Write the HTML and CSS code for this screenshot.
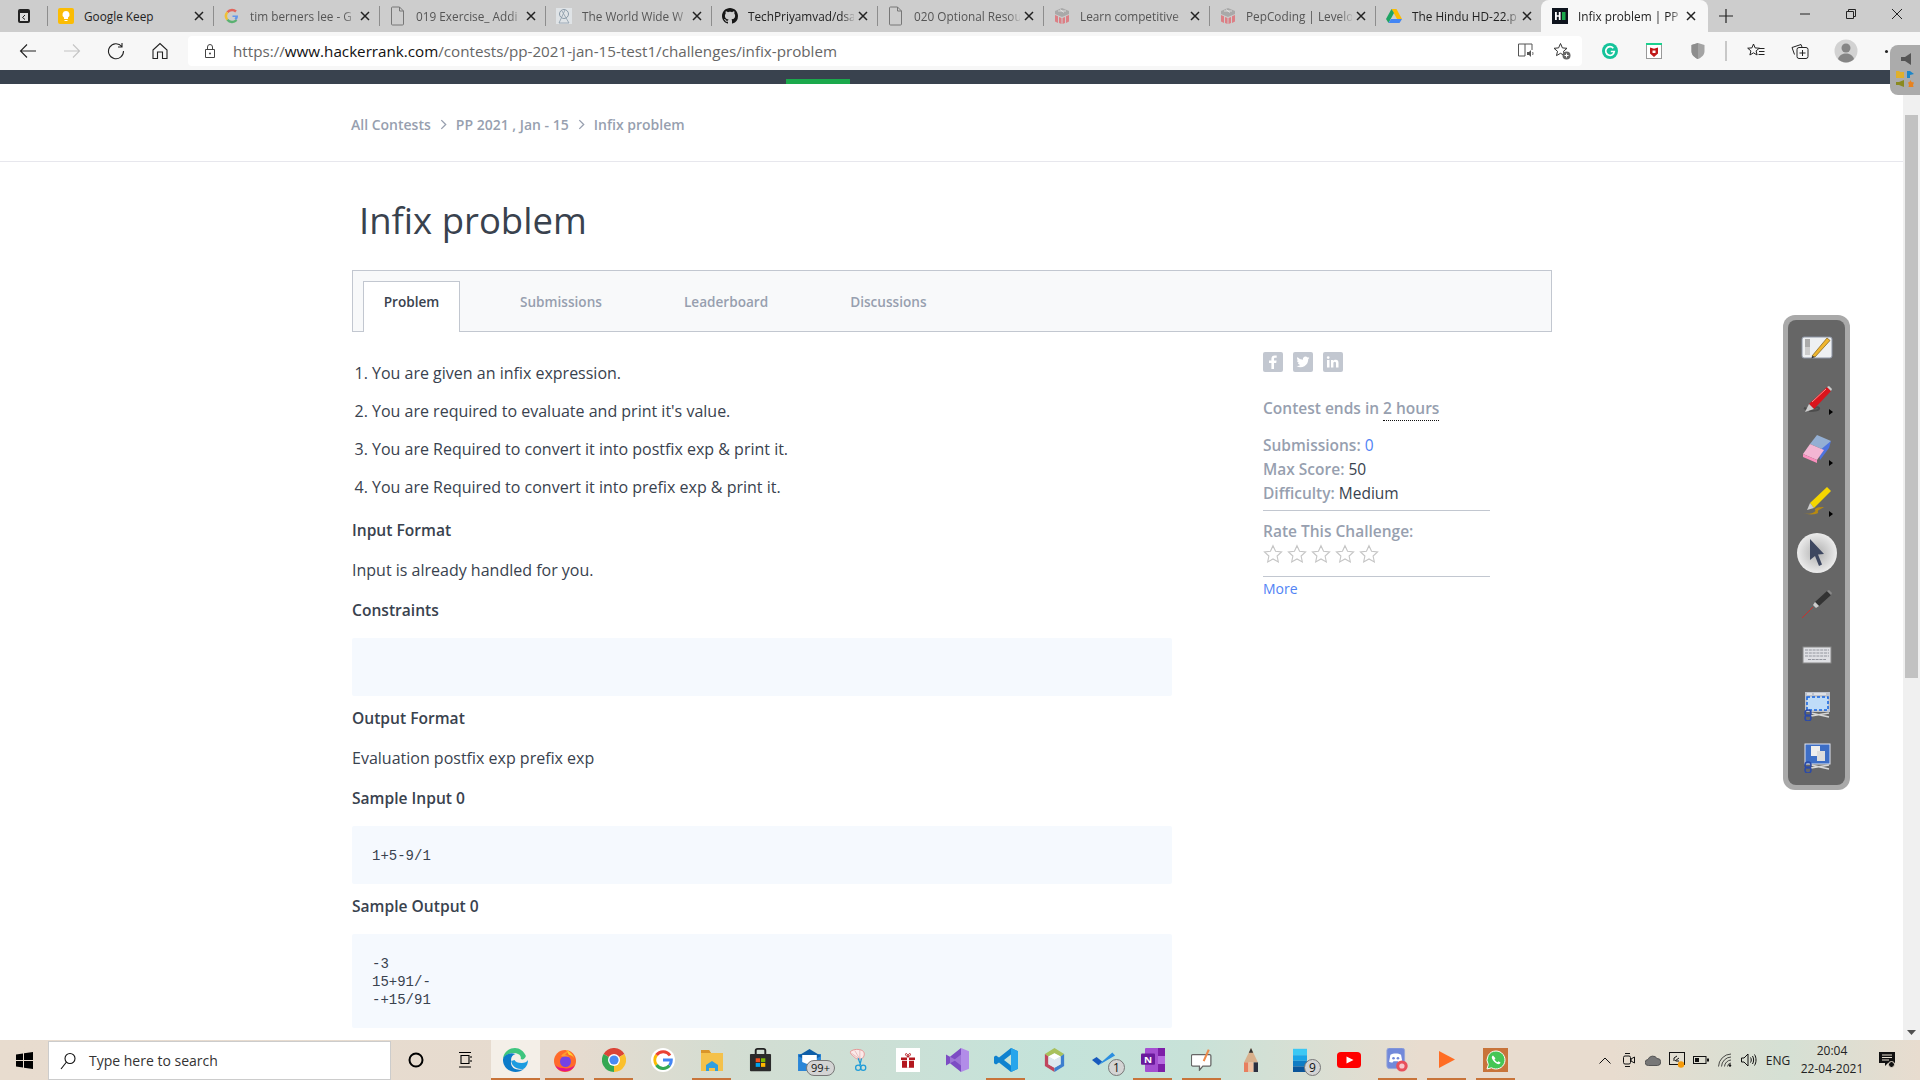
FILE: index.html
```html
<!DOCTYPE html>
<html lang="en">
<head>
<meta charset="utf-8">
<title>Infix problem | PP 2021</title>
<link rel="stylesheet" href="styles.css">
</head>
<body>
<svg class="defs" width="0" height="0">
  <defs>
    <symbol id="doc" viewBox="0 0 16 20"><path d="M2.500 1h7l4 4v13a1 1 0 0 1-1 1h-10a1 1 0 0 1-1-1V2a1 1 0 0 1 1-1zM9.500 1v4h4" fill="none" stroke="#777" stroke-width="1"/></symbol>
    <symbol id="pep" viewBox="0 0 16 16"><path d="M8 0l7 3v3l-7 3-7-3V3z" fill="#a9a9a9"/><path d="M1 7l3 1.300V15l-3-1.500zM5 9l2.500 1v6L5 15zM8.500 10L11 9v6l-2.500 1zM12 8.300L15 7v6.500L12 15z" fill="#dc7f85"/><path d="M4 3h8M6 1.500l4 3" stroke="#eee" stroke-width=".7"/></symbol>
    <symbol id="x" viewBox="0 0 10 10"><path d="M1 1l8 8M9 1l-8 8" stroke="#222" stroke-width="1.500" fill="none"/></symbol>
    <symbol id="arrow" viewBox="0 0 4 6"><path d="M0 0l4 3-4 3z" fill="#000"/></symbol>
  </defs>
</svg>

<header class="tabstrip">
  <div class="tab-menu">
    <svg width="14" height="16" viewBox="0 0 14 16"><rect x="1" y="1" width="12" height="14" rx="2" fill="#222"/><rect x="3" y="5" width="8" height="8" fill="#ddd"/><path d="M8 7L5.500 9.500 8 11.500" stroke="#222" fill="none"/></svg>
  </div>
  <div class="tab">
    <span class="sep"></span>
    <svg class="fav" viewBox="0 0 16 16"><rect width="16" height="16" rx="2" fill="#fbbc04"/><path d="M8 3a3.500 3.500 0 0 0-2 6.400V11h4V9.400A3.500 3.500 0 0 0 8 3zM6.500 12h3v1h-3z" fill="#fff"/></svg>
    <span class="tab-title dark nofade">Google Keep</span>
    <svg class="tab-x"><use href="#x"/></svg>
  </div>
  <div class="tab">
    <span class="sep"></span>
    <svg class="fav faded" viewBox="0 0 16 16"><path d="M8 2a6 6 0 0 0-4.600 2.200" stroke="#ea4335" stroke-width="2.500" fill="none"/><path d="M3.400 4.200a6 6 0 0 0 0 7.600" stroke="#fbbc05" stroke-width="2.500" fill="none"/><path d="M3.400 11.800A6 6 0 0 0 12.500 12" stroke="#34a853" stroke-width="2.500" fill="none"/><path d="M8.500 7.500H14c0 2-.5 3.300-1.500 4.500l-2-1.500c.5-.4.800-1 .9-1.500H8.500z" fill="#4285f4"/><path d="M8 2a6 6 0 0 1 4 1.500" stroke="#ea4335" stroke-width="2.500" fill="none"/></svg>
    <span class="tab-title">tim berners lee - G</span>
    <svg class="tab-x"><use href="#x"/></svg>
  </div>
  <div class="tab">
    <span class="sep"></span>
    <svg class="fav doc-fav"><use href="#doc"/></svg>
    <span class="tab-title">019 Exercise_ Addi</span>
    <svg class="tab-x"><use href="#x"/></svg>
  </div>
  <div class="tab">
    <span class="sep"></span>
    <svg class="fav" viewBox="0 0 16 16"><rect width="16" height="16" fill="#dfe3e6"/><circle cx="8" cy="6" r="4.500" fill="none" stroke="#8a9aa8"/><path d="M3 15L9 2M13 15L6 3M3 15h10" stroke="#8a9aa8" fill="none" stroke-width=".8"/></svg>
    <span class="tab-title">The World Wide W</span>
    <svg class="tab-x"><use href="#x"/></svg>
  </div>
  <div class="tab">
    <span class="sep"></span>
    <svg class="fav" viewBox="0 0 16 16"><path fill="#161616" d="M8 0C3.580 0 0 3.580 0 8c0 3.540 2.290 6.530 5.470 7.590.4.070.55-.17.55-.38 0-.19-.01-.82-.01-1.490-2.010.37-2.530-.49-2.690-.94-.09-.23-.48-.94-.82-1.130-.28-.15-.68-.52-.01-.53.63-.01 1.080.58 1.230.82.72 1.210 1.870.87 2.330.66.070-.52.28-.87.51-1.070-1.780-.2-3.640-.89-3.640-3.950 0-.87.31-1.590.82-2.150-.08-.2-.36-1.020.08-2.120 0 0 .67-.21 2.200.82.64-.18 1.320-.27 2-.27.68 0 1.360.09 2 .27 1.530-1.040 2.200-.82 2.200-.82.44 1.100.16 1.920.08 2.120.51.56.82 1.270.82 2.150 0 3.070-1.870 3.750-3.650 3.950.29.25.54.73.54 1.480 0 1.070-.01 1.930-.01 2.200 0 .21.15.46.55.38A8.013 8.013 0 0 0 16 8c0-4.420-3.580-8-8-8z"/></svg>
    <span class="tab-title dark">TechPriyamvad/dsa</span>
    <svg class="tab-x"><use href="#x"/></svg>
  </div>
  <div class="tab">
    <span class="sep"></span>
    <svg class="fav doc-fav"><use href="#doc"/></svg>
    <span class="tab-title">020 Optional Resou</span>
    <svg class="tab-x"><use href="#x"/></svg>
  </div>
  <div class="tab">
    <span class="sep"></span>
    <svg class="fav"><use href="#pep"/></svg>
    <span class="tab-title">Learn competitive</span>
    <svg class="tab-x"><use href="#x"/></svg>
  </div>
  <div class="tab">
    <span class="sep"></span>
    <svg class="fav"><use href="#pep"/></svg>
    <span class="tab-title">PepCoding | Levelo</span>
    <svg class="tab-x"><use href="#x"/></svg>
  </div>
  <div class="tab">
    <span class="sep"></span>
    <svg class="fav" viewBox="0 0 16 16"><path d="M5.500 1h5L16 11h-5z" fill="#fbbc04"/><path d="M5.500 1L0 11l2.500 4L8 5z" fill="#1fa463"/><path d="M2.500 15h11l2.500-4H5z" fill="#4285f4"/></svg>
    <span class="tab-title dark">The Hindu HD-22.p</span>
    <svg class="tab-x"><use href="#x"/></svg>
  </div>
  <div class="tab active">
    <svg class="fav" viewBox="0 0 16 16"><rect width="16" height="16" fill="#0e141e"/><path d="M3 4h1.800v3.200h2V4h1.800v8H6.800V8.800h-2V12H3z" fill="#fff"/><rect x="10" y="4" width="3.500" height="8" fill="#1ba94c"/></svg>
    <span class="tab-title dark">Infix problem | PP 2</span>
    <svg class="tab-x"><use href="#x"/></svg>
  </div>
  <svg class="newtab" width="16" height="16" viewBox="0 0 16 16"><path d="M8 1v14M1 8h14" stroke="#222" stroke-width="1.200"/></svg>
  <div class="winctl">
    <span class="winbtn"><svg width="12" height="12" viewBox="0 0 12 12"><path d="M1 6h10" stroke="#222"/></svg></span>
    <span class="winbtn"><svg width="12" height="12" viewBox="0 0 12 12"><path d="M1.500 3.500h7v7h-7zM3.500 3.500v-2h7v7h-2" fill="none" stroke="#222"/></svg></span>
    <span class="winbtn"><svg width="12" height="12" viewBox="0 0 12 12"><path d="M1 1l10 10M11 1L1 11" stroke="#222"/></svg></span>
  </div>
</header>

<nav class="toolbar">
  <span class="tbtn"><svg width="18" height="18" viewBox="0 0 18 18"><path d="M17 9H1.500M8 2.500L1.500 9 8 15.500" fill="none" stroke="#222" stroke-width="1.100"/></svg></span>
  <span class="tbtn"><svg width="18" height="18" viewBox="0 0 18 18"><path d="M1 9h15.500M10 2.500L16.500 9 10 15.500" fill="none" stroke="#c4c4c4" stroke-width="1.100"/></svg></span>
  <span class="tbtn"><svg width="18" height="18" viewBox="0 0 18 18"><path d="M14.800 4.500A7.500 7.500 0 1 0 16.500 9M15 1v4h-4" fill="none" stroke="#222" stroke-width="1.100"/></svg></span>
  <span class="tbtn"><svg width="18" height="18" viewBox="0 0 18 18"><path d="M2 8l7-6.500L16 8v8.500h-4.500V10h-5v6.500H2z" fill="none" stroke="#222" stroke-width="1.100"/></svg></span>
  <div class="address">
    <svg class="lock" width="14" height="16" viewBox="0 0 14 16"><path d="M2.500 6.500h9v8h-9zM4.500 6.500V4a2.500 2.500 0 0 1 5 0v2.500" fill="none" stroke="#444"/><circle cx="7" cy="10.500" r="1" fill="#444"/></svg>
    <span class="url">https://<b>www.hackerrank.com</b>/contests/pp-2021-jan-15-test1/challenges/infix-problem</span>
    <span class="addr-icon"><svg width="18" height="16" viewBox="0 0 18 16"><path d="M8 13H1.500V1H8v12zM8 1h7v6" fill="none" stroke="#555"/><path d="M10 9h2l2-2v7l-2-2h-2z" fill="#555"/><path d="M15.500 9c.6.8.6 2.200 0 3" stroke="#555" fill="none"/></svg></span>
    <span class="addr-icon last"><svg width="18" height="18" viewBox="0 0 18 18"><path d="M7.500 1.500l1.900 4.400 4.600.4-3.500 3 1 4.300-4-2.300-4 2.300 1-4.300-3.500-3 4.600-.4z" fill="none" stroke="#333"/><circle cx="13.500" cy="13.500" r="4" fill="#666"/><path d="M11.500 13.500h4M13.500 11.500v4" stroke="#fff"/></svg></span>
  </div>
  <div class="ext">
    <span class="ext-btn"><svg width="16" height="16" viewBox="0 0 16 16"><circle cx="8" cy="8" r="8" fill="#15c39a"/><path d="M11.300 5.200A4.300 4.300 0 1 0 12.300 8.500H8.800" fill="none" stroke="#fff" stroke-width="1.700"/></svg></span>
    <span class="ext-btn"><svg width="16" height="16" viewBox="0 0 16 16"><rect x=".5" y=".5" width="15" height="15" fill="#fff" stroke="#999"/><rect width="16" height="2" fill="#1bd18e"/><path d="M4 4.500l4 1.200 4-1.200v6L8 14l-4-3.500z" fill="#c01818"/><path d="M6.500 7.500h3v2.500h-3z" fill="#fff"/></svg></span>
    <span class="ext-btn"><svg width="14" height="16" viewBox="0 0 14 16"><path d="M7 0l6.500 2v6c0 4-3 6.500-6.500 8-3.500-1.500-6.500-4-6.500-8V2z" fill="#a4a4a4"/><path d="M7 0v16c-3.500-1.500-6.500-4-6.500-8V2z" fill="#8e8e8e"/></svg></span>
    <span class="ext-sep"></span>
    <span class="ext-btn fav-btn"><svg width="18" height="18" viewBox="0 0 18 18"><path d="M6.500 2l1.600 3.900 4.200.3-3.200 2.700 1 4.100-3.600-2.200L2.900 13l1-4.100L.7 6.200l4.200-.3z" fill="none" stroke="#222"/><path d="M12 6.500h5.500M12 9.500h5.500M11.500 12.500h6" stroke="#222"/></svg></span>
    <span class="ext-btn"><svg width="18" height="18" viewBox="0 0 18 18"><path d="M3.500 12.500L1 5.500l9-3 1 2.500" fill="none" stroke="#222"/><rect x="6" y="5.500" width="11" height="11" rx="2" fill="#f7f7f7" stroke="#222"/><path d="M11.500 8v6M8.500 11h6" stroke="#222"/></svg></span>
    <span class="ext-btn avatar-btn"><svg width="24" height="24" viewBox="0 0 24 24"><circle cx="12" cy="12" r="11.500" fill="#d2d2d2"/><circle cx="12" cy="9" r="4.500" fill="#858585"/><path d="M4 20c1.500-4 4.500-5.500 8-5.500s6.500 1.500 8 5.500c-2 2.300-5 3.500-8 3.500s-6-1.200-8-3.500z" fill="#858585"/></svg></span>
    <span class="ext-btn dots-btn"><span class="dots"></span></span>
  </div>
</nav>

<div class="page">
  <main class="content">
    <div class="navbar"><span class="nav-active"></span></div>
    <div class="crumbs">
      <a>All Contests</a>
      <svg width="7" height="11" viewBox="0 0 6 10"><path d="M1 1l4 4-4 4" fill="none" stroke="#979faf" stroke-width="1.200"/></svg>
      <a>PP 2021 , Jan - 15</a>
      <svg width="7" height="11" viewBox="0 0 6 10"><path d="M1 1l4 4-4 4" fill="none" stroke="#979faf" stroke-width="1.200"/></svg>
      <a>Infix problem</a>
    </div>
    <div class="wrap">
      <h1 class="title">Infix problem</h1>
      <div class="ptabs">
        <a class="ptab current">Problem</a>
        <a class="ptab first">Submissions</a>
        <a class="ptab">Leaderboard</a>
        <a class="ptab">Discussions</a>
      </div>
      <div class="columns">
        <article class="statement">
          <ol class="steps">
            <li>You are given an infix expression.</li>
            <li>You are required to evaluate and print it's value.</li>
            <li>You are Required to convert it into postfix exp &amp; print it.</li>
            <li>You are Required to convert it into prefix exp &amp; print it.</li>
          </ol>
          <h4 class="section first-section">Input Format</h4>
          <p class="para">Input is already handled for you.</p>
          <h4 class="section">Constraints</h4>
          <pre class="code empty"></pre>
          <h4 class="section">Output Format</h4>
          <p class="para">Evaluation postfix exp prefix exp</p>
          <h4 class="section">Sample Input 0</h4>
          <pre class="code">1+5-9/1</pre>
          <h4 class="section">Sample Output 0</h4>
          <pre class="code">-3
15+91/-
-+15/91</pre>
        </article>
        <aside class="side">
          <div class="social">
            <span class="soc"><svg width="20" height="20" viewBox="0 0 20 20"><path d="M11 17v-6h2.200l.4-2.500H11V7c0-.8.300-1.200 1.300-1.200h1.400V3.500c-.4 0-1.100-.1-2-.1-2 0-3.300 1.200-3.300 3.300v1.800H6V11h2.400v6z" fill="#fff"/></svg></span>
            <span class="soc"><svg width="20" height="20" viewBox="0 0 20 20"><path d="M16.500 5.800c-.5.200-1 .4-1.500.4.500-.3 1-.8 1.200-1.400-.5.300-1.100.5-1.700.6a2.700 2.700 0 0 0-4.600 2.400A7.500 7.500 0 0 1 4.400 5a2.700 2.700 0 0 0 .8 3.600c-.4 0-.8-.1-1.200-.3 0 1.300.9 2.400 2.100 2.700-.4.100-.8.100-1.200 0 .3 1.100 1.300 1.800 2.500 1.900A5.400 5.400 0 0 1 3.500 14a7.600 7.600 0 0 0 11.700-6.700c.5-.4 1-.9 1.300-1.500z" fill="#fff"/></svg></span>
            <span class="soc"><svg width="20" height="20" viewBox="0 0 20 20"><path d="M4 8h2.500v7.500H4zM5.200 4.200a1.400 1.400 0 1 1 0 2.800 1.400 1.400 0 0 1 0-2.800zM8 8h2.400v1c.4-.7 1.200-1.200 2.300-1.200 2.300 0 2.800 1.500 2.800 3.500v4.200H13v-3.700c0-.9 0-2-1.200-2s-1.400 1-1.400 1.900v3.800H8z" fill="#fff"/></svg></span>
          </div>
          <p class="ends">Contest ends in <span class="hours">2 hours</span></p>
          <p class="stat first-stat">Submissions: <a class="blue">0</a></p>
          <p class="stat">Max Score: <span class="val">50</span></p>
          <p class="stat">Difficulty: <span class="val">Medium</span></p>
          <hr class="rule">
          <p class="stat rate">Rate This Challenge:</p>
          <div class="stars">
            <svg width="20" height="20" viewBox="0 0 18 18"><path d="M9 1.500l2.300 5 5.400.6-4 3.700 1.100 5.400L9 13.500l-4.800 2.700 1.100-5.400-4-3.700 5.400-.6z" fill="#fff" stroke="#c5c5c5"/></svg>
            <svg width="20" height="20" viewBox="0 0 18 18"><path d="M9 1.500l2.300 5 5.400.6-4 3.700 1.100 5.400L9 13.500l-4.800 2.700 1.100-5.400-4-3.700 5.400-.6z" fill="#fff" stroke="#c5c5c5"/></svg>
            <svg width="20" height="20" viewBox="0 0 18 18"><path d="M9 1.500l2.300 5 5.400.6-4 3.700 1.100 5.400L9 13.500l-4.800 2.700 1.100-5.400-4-3.700 5.400-.6z" fill="#fff" stroke="#c5c5c5"/></svg>
            <svg width="20" height="20" viewBox="0 0 18 18"><path d="M9 1.500l2.300 5 5.400.6-4 3.700 1.100 5.400L9 13.500l-4.800 2.700 1.100-5.400-4-3.700 5.400-.6z" fill="#fff" stroke="#c5c5c5"/></svg>
            <svg width="20" height="20" viewBox="0 0 18 18"><path d="M9 1.500l2.300 5 5.400.6-4 3.700 1.100 5.400L9 13.500l-4.800 2.700 1.100-5.400-4-3.700 5.400-.6z" fill="#fff" stroke="#c5c5c5"/></svg>
          </div>
          <hr class="rule lower">
          <a class="more">More</a>
        </aside>
      </div>
    </div>
  </main>
  <div class="scrollbar">
    <svg class="sb-arrow" width="9" height="5" viewBox="0 0 9 5"><path d="M0 0h9L4.500 5z" fill="#505050"/></svg>
    <div class="sb-thumb"></div>
    <svg class="sb-arrow" width="9" height="5" viewBox="0 0 9 5"><path d="M0 0h9L4.500 5z" fill="#505050"/></svg>
  </div>
</div>

<footer class="taskbar">
  <span class="start"><svg width="17" height="17" viewBox="0 0 17 17"><path d="M0 2.400L7 1.400v6.600H0zM8 1.300L17 0v8H8zM0 9h7v6.600l-7-1zM8 9h9v8l-9-1.300z" fill="#000"/></svg></span>
  <div class="search">
    <svg width="16" height="18" viewBox="0 0 16 18"><circle cx="10" cy="6.500" r="5" fill="none" stroke="#111" stroke-width="1.100"/><path d="M6.500 10L1 17" stroke="#111" stroke-width="1.100"/></svg>
    <span>Type here to search</span>
  </div>
  <span class="tb-sys"><svg width="16" height="16" viewBox="0 0 16 16"><circle cx="8" cy="8" r="6.500" fill="none" stroke="#000" stroke-width="2"/></svg></span>
  <span class="tb-sys"><svg width="16" height="16" viewBox="0 0 16 16"><path d="M2 .5h12M4 3.500h8v8H4zM2 15h12M14 4v2M14 8v2" fill="none" stroke="#000" stroke-width="1.100"/></svg></span>
  <div class="tb-apps">
    <span class="app open lit"><svg width="25" height="24" viewBox="0 0 24 24" preserveAspectRatio="none"><path d="M22 8C20 3 16 0 11.500 0 5 0 .5 5 0 11c2-4 6-6 10-6 4 0 8 2 7 6 2 1 4 0 5-3z" fill="#3ec57e"/><path d="M0 11C-.5 18 5 24 12 24c3 0 6-1 8-3-3 1-7 1-10-1-2-2-3-5-2-7-1-3 1-6 4-7C6 4 1 7 0 11z" fill="#0c7bc9"/><path d="M8 13c0 4 4 8 9 8 2 0 3 0 4-1 2-2 3-5 3-8-1 2-3 3-6 3-4 0-6-1-7-3z" fill="#1d9ce0"/></svg></span>
    <span class="app open"><svg width="24" height="24" viewBox="0 0 24 24"><circle cx="12" cy="13" r="11" fill="#ff6a2a"/><path d="M2 17a11 11 0 0 0 20 0c-3 3-8 4-12 3-4 0-6-1-8-3z" fill="#e31587"/><path d="M13 2c3 1 7 4 8 8-2-3-4-3-5-3z" fill="#ffd02f"/><circle cx="12.500" cy="13.500" r="5.500" fill="#7542e5"/><path d="M8 8c2-3 5-4 7-5-1 2-2 3-3 4 2 0 3 1 4 2-3-1-6 0-8-1z" fill="#ff9b2f"/></svg></span>
    <span class="app open"><svg width="24" height="24" viewBox="0 0 24 24"><path d="M12 12L1.600 6A12 12 0 0 1 22.400 6z" fill="#db4437"/><path d="M12 12L22.400 6A12 12 0 0 1 12 24z" fill="#fbc02d"/><path d="M12 24A12 12 0 0 1 1.600 6L12 12z" fill="#33a852"/><circle cx="12" cy="12" r="6" fill="#fff"/><circle cx="12" cy="12" r="4.600" fill="#4a8af4"/></svg></span>
    <span class="app"><svg width="24" height="24" viewBox="0 0 24 24"><circle cx="12" cy="12" r="12" fill="#fff"/><path d="M19 7.500A8.300 8.300 0 0 0 5.500 7" fill="none" stroke="#ea4335" stroke-width="3"/><path d="M5.500 7a8.300 8.300 0 0 0 0 10" fill="none" stroke="#fbbc05" stroke-width="3"/><path d="M5.500 17a8.300 8.300 0 0 0 13 .5" fill="none" stroke="#34a853" stroke-width="3"/><path d="M18.500 17.500A8.300 8.300 0 0 0 20.300 12H12" fill="none" stroke="#4285f4" stroke-width="3"/></svg></span>
    <span class="app open"><svg width="24" height="24" viewBox="0 0 24 24"><path d="M1 2h8l2 3h12v18H1z" fill="#f4c14b"/><path d="M1 2h8l2 3H1z" fill="#d9952a"/><path d="M6 23v-6l6-4 6 4v6h-3v-3H9v3z" fill="#2f9fe0"/></svg></span>
    <span class="app"><svg width="23" height="24" viewBox="0 0 24 28" preserveAspectRatio="none"><path d="M7 7V3a2 2 0 0 1 2-2h6a2 2 0 0 1 2 2v4" fill="none" stroke="#222" stroke-width="2"/><rect x="1" y="7" width="22" height="20" rx="1" fill="#2b2b2b"/><rect x="7" y="12" width="4.500" height="4.500" fill="#f25022"/><rect x="12.500" y="12" width="4.500" height="4.500" fill="#7fba00"/><rect x="7" y="17.500" width="4.500" height="4.500" fill="#00a4ef"/><rect x="12.500" y="17.500" width="4.500" height="4.500" fill="#ffb900"/></svg></span>
    <span class="app"><svg width="25" height="24" viewBox="0 0 24 24" preserveAspectRatio="none"><rect x="1" y="6" width="22" height="17" fill="#2a86d8"/><path d="M1 8l11-7 11 7-11 6z" fill="#0f5fa8"/><path d="M5 7h14v7l-7 3-7-3z" fill="#fff"/></svg><span class="badge wide">99+</span></span>
    <span class="app"><svg width="22" height="24" viewBox="0 0 26 28" preserveAspectRatio="none"><path d="M3 4c4-3 10-3 14-1 3 2 3 6 0 9-3 2-7 1-9-1-2-2-6-4-5-7z" fill="#fbe9e9" stroke="#e88b8b"/><path d="M4 6l10 7M8 3l6 10M14 2v11" stroke="#d8a0a0" stroke-width=".7"/><path d="M12 12l3 8M16 12l-2 8" stroke="#1f9cd8" stroke-width="1.500"/><circle cx="12" cy="23" r="3" fill="none" stroke="#1f9cd8" stroke-width="1.500"/><circle cx="18" cy="23" r="3" fill="none" stroke="#1f9cd8" stroke-width="1.500"/></svg></span>
    <span class="app"><svg width="24" height="24" viewBox="0 0 24 28" preserveAspectRatio="none"><rect width="24" height="28" fill="#fff"/><path d="M5 11h14v3H5zM6 15h12v8H6z" fill="#b3171e"/><path d="M11 11h2v12h-2z" fill="#fff"/><path d="M12 10.500C9 9 9 6 10.500 6.500S12 10.500 12 10.500zM12 10.500C15 9 15 6 13.500 6.500S12 10.500 12 10.500z" fill="none" stroke="#b3171e"/></svg></span>
    <span class="app"><svg width="24" height="24" viewBox="0 0 24 30" preserveAspectRatio="none"><path d="M16 0l8 4v22l-8 4z" fill="#b28ce8"/><path d="M16 0v30L5 19 1 22V8l4 3z" fill="#7d4cc4"/><path d="M5 11l6 4-6 4zM16 8v14l-7-7z" fill="#c7a8f0" opacity=".45"/></svg></span>
    <span class="app open"><svg width="24" height="24" viewBox="0 0 24 30" preserveAspectRatio="none"><path d="M17 0l7 4v22l-7 4L5 18l-3 2.500L0 19v-8l2-1.500L5 12zM17 8l-7 7 7 7z" fill="#0f82cf"/><path d="M17 0l7 4v22l-7 4z" fill="#27a5ec"/></svg></span>
    <span class="app"><svg width="21" height="24" viewBox="0 0 24 28" preserveAspectRatio="none"><path d="M12 0l11 7-4 3-7-4-7 4-4-3z" fill="#a9c15c"/><path d="M1 7l4 3v9l7 4v5L1 21z" fill="#c0465e"/><path d="M23 7l-4 3v9l-7 4v5l11-7z" fill="#3d7fcf"/><path d="M12 6l7 4-7 4-7-4z" fill="#fff"/><path d="M5 10l7 4v9l-7-4zM19 10l-7 4v9l7-4z" fill="#dde8ef"/></svg></span>
    <span class="app"><svg width="24" height="18" viewBox="0 0 26 24" preserveAspectRatio="none"><path d="M0 12l5-4 6 6-4 5z" fill="#185abd"/><path d="M7 19l4-5L22 2l3 4z" fill="#2b8fe0"/></svg><span class="badge round">1</span></span>
    <span class="app open"><svg width="24" height="24" viewBox="0 0 24 30" preserveAspectRatio="none"><rect x="4" y="0" width="20" height="30" rx="1" fill="#a44fd1"/><rect x="17" y="0" width="7" height="30" fill="#7d1fa8"/><rect x="17" y="10" width="7" height="10" fill="#b66be0"/><rect x="0" y="7" width="14" height="14" rx="1" fill="#6a1a9c"/><text class="on-n" x="7" y="18.500">N</text></svg></span>
    <span class="app open"><svg width="22" height="23" viewBox="0 0 26 28" preserveAspectRatio="none"><path d="M2 8h20a1.500 1.500 0 0 1 1.500 1.500v11a1.500 1.500 0 0 1-1.500 1.500h-8l-4 5v-5H2a1.500 1.500 0 0 1-1.500-1.500v-11A1.500 1.500 0 0 1 2 8z" fill="#fff" stroke="#666" stroke-width="1.500"/><path d="M15 16L21 2" stroke="#ee8a4a" stroke-width="2.500"/></svg></span>
    <span class="app"><svg width="14" height="24" viewBox="0 0 16 30" preserveAspectRatio="none"><path d="M8 0l8 18H0z" fill="#d8b08c"/><path d="M8 0l2.500 6h-5z" fill="#333"/><path d="M0 18h5v12H0z" fill="#e87f5f"/><path d="M5 18h6v12H5z" fill="#f0c0a0"/><path d="M11 18h5v12h-5z" fill="#2b3040"/></svg></span>
    <span class="app"><svg width="14" height="24" viewBox="0 0 16 30" preserveAspectRatio="none"><path d="M0 1h16v8H0z" fill="#3cc8f4"/><path d="M0 9h16v7H0z" fill="#1aa5e8"/><path d="M0 16h16v7H0z" fill="#0f7cc4"/><path d="M0 23h16v7H0z" fill="#0a559a"/></svg><span class="badge round">9</span></span>
    <span class="app"><svg width="24" height="16" viewBox="0 0 24 18" preserveAspectRatio="none"><rect width="24" height="18" rx="4" fill="#f00"/><path d="M9.500 5v8l7-4z" fill="#fff"/></svg></span>
    <span class="app open"><svg width="23" height="24" viewBox="0 0 26 28" preserveAspectRatio="none"><rect x="1" y="0" width="20" height="24" rx="3" fill="#7289da" stroke="#97a6d8"/><path d="M5 8c3-2 9-2 12 0l1.500 8c-2 1-3 1-4 1l-1-1.500h-5L7.500 17c-1 0-2 0-4-1z" fill="#fff"/><circle cx="8.500" cy="12" r="1.500" fill="#7289da"/><circle cx="13.500" cy="12" r="1.500" fill="#7289da"/><circle cx="18" cy="21" r="6.500" fill="#e8505b"/><circle cx="18" cy="21" r="3" fill="#f8c8cc"/></svg></span>
    <span class="app open"><svg width="16" height="17" viewBox="0 0 16 22" preserveAspectRatio="none"><path d="M0 0l16 11L0 22z" fill="#ff6d24"/></svg></span>
    <span class="app open wa"><span class="wa-tile"><svg width="20" height="20" viewBox="0 0 20 20"><path d="M10 1a9 9 0 0 0-7.700 13.600L1 19l4.500-1.200A9 9 0 1 0 10 1z" fill="#45c655" stroke="#fff"/><path d="M7 5.500c-1 .5-1.500 1.500-1 3 1 2.500 3 4.500 5.500 5.500 1.500.5 2.700-.3 3-1.500l-2-1.200-1 1c-1.500-.5-2.500-1.700-3-3l1-1z" fill="#fff"/></svg></span></span>
  </div>
  <div class="tray">
    <span class="tray-i"><svg width="12" height="7" viewBox="0 0 12 7"><path d="M.5 6.500L6 1l5.500 5.500" fill="none" stroke="#111"/></svg></span>
    <span class="tray-i"><svg width="12" height="16" viewBox="0 0 12 16"><rect x=".5" y="4" width="7" height="8" rx="1.500" fill="none" stroke="#111"/><path d="M8 7l3.500-2v6L8 9zM2 1.500h5M2 14.500h5" fill="none" stroke="#111"/></svg></span>
    <span class="tray-i"><svg width="16" height="11" viewBox="0 0 16 11"><path d="M3.500 10.500a3 3 0 0 1-.5-6A5 5 0 0 1 12 3.500a3.500 3.500 0 0 1 .5 7z" fill="#777" stroke="#555"/></svg></span>
    <span class="tray-i"><svg width="16" height="16" viewBox="0 0 16 16"><rect x=".5" y=".5" width="15" height="12" fill="none" stroke="#111"/><path d="M5 9V6l3-2M6 9l4-3M10 9H7" fill="none" stroke="#111"/><circle cx="12" cy="12.500" r="3.200" fill="#f59b0c"/></svg></span>
    <span class="tray-i"><svg width="16" height="8" viewBox="0 0 16 8"><rect x=".5" y=".5" width="12.500" height="7" fill="none" stroke="#111"/><rect x="2" y="2" width="4" height="4" fill="#111"/><rect x="14" y="2.500" width="2" height="3" fill="#111"/></svg></span>
    <span class="tray-i"><svg width="14" height="14" viewBox="0 0 14 14"><path d="M.5 13.500A13 13 0 0 1 13 1M3.500 13.500A10 10 0 0 1 13 4M6.500 13.500A7 7 0 0 1 13 7M9.500 13.500A4 4 0 0 1 13 10" fill="none" stroke="#222" stroke-width=".8"/><circle cx="12" cy="12.500" r="1.200" fill="#111"/></svg></span>
    <span class="tray-i"><svg width="16" height="14" viewBox="0 0 16 14"><path d="M.5 5h2.500L7 1v12L3 9H.5z" fill="none" stroke="#111"/><path d="M9.500 4.500c1 1.500 1 3.500 0 5M11.500 3c1.500 2.500 1.500 5.500 0 8M13.500 1.500c2 3 2 8 0 11" fill="none" stroke="#111"/></svg></span>
    <span class="eng">ENG</span>
    <span class="clock"><span>20:04</span><span>22-04-2021</span></span>
    <span class="notif"><svg width="17" height="16" viewBox="0 0 17 16"><path d="M0 0h16v11H9l-3 3v-3H0z" fill="#111"/><path d="M3 3h10M3 5.500h10M3 8h7" stroke="#e8dfd0"/><circle cx="12.500" cy="12.500" r="3" fill="#111" stroke="#e8dfd0"/></svg></span>
  </div>
</footer>

<aside class="ink">
  <div class="ink-inner">
    <span class="ink-slot"><svg width="32" height="26" viewBox="0 0 32 26"><rect x="1" y="2" width="30" height="21" rx="2" fill="#eef0f2" stroke="#8b93a3"/><rect x="4" y="4" width="5" height="8" fill="#aaa"/><rect x="4" y="12" width="5" height="8" fill="#ccc"/><path d="M11 21L26 3l3 2.500L14 22z" fill="#f0b62e" stroke="#7a5a16" stroke-width=".7"/><path d="M11 21l3 1-3.500 1.500z" fill="#333"/></svg></span>
    <span class="ink-slot tool"><svg width="34" height="32" viewBox="0 0 34 32"><path d="M4 25C12 29 16 22 19 25c1 2-4 3-10 3" fill="none" stroke="#4c4c4c" stroke-width="2"/><path d="M9 21L27 4l4 4L14 26z" fill="#d9141c"/><path d="M27 4l2-1 3 3-1 2z" fill="#ccc"/><path d="M12 19L26 6" stroke="#ff8a8a"/><path d="M9 21l5 5-9 3z" fill="#ccc"/><use href="#arrow" x="29" y="26" width="4" height="6"/></svg></span>
    <span class="ink-slot tool"><svg width="34" height="32" viewBox="0 0 34 32"><path d="M17 1l14 6-7 9-14-6z" fill="#94afd3"/><path d="M31 7l-2 7-9 12-1-9z" fill="#4e74e0"/><path d="M10 10l14 6-7 10L3 20z" fill="#f3b6d3"/><path d="M3 20l14 6v3L3 23z" fill="#fb8fbe"/><use href="#arrow" x="29" y="26" width="4" height="6"/></svg></span>
    <span class="ink-slot tool"><svg width="34" height="32" viewBox="0 0 34 32"><path d="M10 18L27 2l4 4L14 23z" fill="#f5d600"/><path d="M10 18l4 5-7 2z" fill="#ccc"/><path d="M3 28c6 2 14-1 12-3-1-2 4-3 9-3-4 3-7 3-6 5 1 3-10 3-15 1z" fill="#b88a10"/><use href="#arrow" x="29" y="26" width="4" height="6"/></svg></span>
    <span class="ink-slot"><span class="ink-cursor"><svg width="16" height="28" viewBox="0 0 16 28"><path d="M1 0l14 15-6 .5 4 10-3 1.500-4-10-5 4z" fill="#3d4760"/></svg></span></span>
    <span class="ink-slot"><svg width="34" height="32" viewBox="0 0 34 32"><path d="M15 14L27 3l4 4-12 11z" fill="#333"/><path d="M27 3l2-1 3 3-1 2z" fill="#888"/><path d="M15 14l4 4-3 2-3-3z" fill="#ccc"/><path d="M13 19L2 30" stroke="#c9302c"/></svg></span>
    <span class="ink-slot"><svg width="30" height="18" viewBox="0 0 30 18"><rect x="1" y="1" width="28" height="16" fill="#dfe0e4" stroke="#888"/><path d="M3 4h24M3 7h24M3 10h24M6 13.500h18" stroke="#8a8c95" stroke-width=".9" stroke-dasharray="3 .8"/></svg></span>
    <span class="ink-slot"><svg width="28" height="30" viewBox="0 0 28 30"><rect x="2" y="1" width="25" height="20" fill="#bec3cc"/><rect x="4" y="6" width="21" height="13" fill="#bfdcf8" stroke="#1463e0" stroke-width="1.500" stroke-dasharray="3 2"/><path d="M4 3h5M11 3h12" stroke="#fff"/><path d="M8 25l18-3M8 22l18 4" stroke="#d8d8d8" stroke-width="1.500"/><circle cx="5" cy="22" r="3" fill="none" stroke="#2b4aa8" stroke-width="1.500"/><circle cx="5" cy="27" r="3" fill="none" stroke="#2b4aa8" stroke-width="1.500"/></svg></span>
    <span class="ink-slot"><svg width="28" height="30" viewBox="0 0 28 30"><rect x="2" y="1" width="25" height="20" fill="#3d6ec6" stroke="#dfe4f0"/><rect x="8" y="3" width="9" height="10" fill="#eee"/><rect x="14" y="8" width="8" height="10" fill="#ddd"/><path d="M8 25l18-3M8 22l18 4" stroke="#d8d8d8" stroke-width="1.500"/><circle cx="5" cy="22" r="3" fill="none" stroke="#2b4aa8" stroke-width="1.500"/><circle cx="5" cy="27" r="3" fill="none" stroke="#2b4aa8" stroke-width="1.500"/></svg></span>
  </div>
</aside>

<aside class="mini">
  <svg width="10" height="12" viewBox="0 0 10 12"><path d="M10 0v12L4 8H0V4h4z" fill="#555"/></svg>
  <div class="mini-grid">
    <svg width="8" height="7" viewBox="0 0 8 7"><path d="M0 0h3l1 1h4v6H0z" fill="#e0b02c"/></svg>
    <svg width="7" height="7" viewBox="0 0 7 7"><path d="M0 0h3l4 3-4 1v3H0z" fill="#1c86c8"/></svg>
    <svg width="8" height="7" viewBox="0 0 8 7"><path d="M0 2h3l5-2v7L3 5H0z" fill="#8a8a20"/></svg>
    <svg width="7" height="7" viewBox="0 0 7 7"><path d="M3.500 0l1 2 2.500.500-1 2.500.5 2h-5l.500-2-1-2.500L2.500 2z" fill="#e8821e"/></svg>
  </div>
</aside>
</body>
</html>
```

FILE: styles.css
```css
* { box-sizing: border-box; }
html, body { margin: 0; height: 100%; }
body {
  width: 1920px; height: 1080px; overflow: hidden; position: relative;
  display: flex; flex-direction: column; background: #fff;
  font-family: "Open Sans", "Noto Sans", sans-serif; color: #39424e;
}
.defs { position: absolute; }
svg { display: block; flex: none; }
b { font-weight: 400; }

/* browser tab strip */
.tabstrip { height: 32px; flex: none; display: flex; align-items: center; background: #cdcdcd; }
.tab-menu { width: 47px; display: flex; padding-left: 17px; flex: none; }
.tab { width: 166px; height: 32px; flex: none; display: flex; align-items: center; padding-right: 9px; }
.sep { width: 1px; height: 20px; background: #8d8d8d; margin-right: 10px; flex: none; }
.fav { width: 16px; height: 16px; margin-right: 10px; }
.faded { opacity: .75; }
.doc-fav { height: 20px; }
.tab-title {
  flex: 1; min-width: 0; white-space: nowrap;
  font-size: 11.800px; color: #555;
  -webkit-mask-image: linear-gradient(90deg, #000 88%, rgba(0,0,0,.15) 100%);
  mask-image: linear-gradient(90deg, #000 88%, rgba(0,0,0,.15) 100%);
}
.tab-title.dark { color: #222; }
.tab-title.nofade { -webkit-mask-image: none; mask-image: none; }
.tab-x { width: 10px; height: 10px; margin-left: 4px; flex: none; }
.tab.active { width: 167px; background: #f7f7f7; border-radius: 8px 8px 0 0; padding-left: 11px; padding-right: 12px; }
.newtab { margin-left: 10px; }
.winctl { margin-left: auto; display: flex; }
.winbtn { width: 46px; height: 32px; display: flex; align-items: center; justify-content: center; padding-bottom: 4px; }

/* toolbar */
.toolbar { height: 38px; flex: none; background: #f7f7f7; display: flex; align-items: center; padding-left: 10px; gap: 8px; }
.tbtn { width: 36px; height: 30px; display: flex; align-items: center; justify-content: center; flex: none; }
.address { width: 1394px; height: 30px; margin-left: 2px; background: #fff; border-radius: 4px; display: flex; align-items: center; padding-left: 15px; flex: none; }
.lock { margin-right: 16px; }
.url { flex: 1; font-size: 15.200px; color: #666; white-space: nowrap; }
.url b { color: #111; }
.addr-icon { width: 36px; display: flex; justify-content: center; }
.addr-icon.last { margin-right: 2px; }
.ext { display: flex; align-items: center; gap: 4px; margin-left: 0; }
.ext-btn { width: 40px; height: 30px; display: flex; align-items: center; justify-content: center; }
.ext-sep { width: 2px; height: 20px; background: #c8c8c8; margin-left: 3px; }
.fav-btn { margin-left: 5px; }
.avatar-btn, .dots-btn { margin-left: 2px; }
.dots { width: 3px; height: 3px; background: #222; border-radius: 50%; box-shadow: 6px 0 0 #222, -6px 0 0 #222; }

/* page */
.page { flex: 1; min-height: 0; display: flex; }
.content { flex: 1; min-width: 0; overflow: hidden; }
.navbar { height: 14px; background: #39424e; display: flex; align-items: flex-end; padding-left: 786px; }
.nav-active { width: 64px; height: 5px; background: #1ba94c; }
.crumbs { height: 78px; border-bottom: 1px solid #e7e7ed; padding: 4px 0 0 351px; display: flex; align-items: center; font-size: 14px; font-weight: 600; color: #979faf; gap: 9px; }
.wrap { margin-left: 352px; width: 1200px; }
.title { margin: 33px 0 25px; padding-left: 7px; font-size: 36.500px; line-height: 50px; font-weight: 500; color: #39424e; }
.ptabs { height: 62px; border: 1px solid #c2c7d0; background: #f8f9fa; display: flex; align-items: flex-end; padding-left: 10px; }
.ptab { height: 51px; padding: 9px 41px 0; font-size: 13.600px; line-height: 24px; font-weight: 600; color: #979faf; margin-bottom: -1px; flex: none; }
.ptab.current { width: 97px; padding: 8px 0 0; text-align: center; background: #fff; border: 1px solid #c2c7d0; border-bottom: 0; color: #39424e; }
.ptab.first { margin-left: 19px; }
.columns { display: flex; }
.statement { width: 820px; flex: none; padding-top: 29px; font-size: 16px; line-height: 24px; }
.steps { margin: 0; padding: 0 0 0 20px; list-style: decimal; }
.steps li { margin-bottom: 14px; }
.section { margin: 0 0 16px; font-size: 15.600px; line-height: 24px; font-weight: 600; }
.first-section { margin-top: 19px; }
.para { margin: 0 0 16px; }
.code { margin: 0 0 10px; padding: 21px 20px 19px; background: #f5f9fe; border-radius: 2px; font-family: "Liberation Mono", monospace; font-size: 14px; line-height: 18px; color: #39424e; }
.code.empty { height: 58px; }
.side { margin-left: 91px; padding-top: 20px; width: 227px; font-size: 15.500px; line-height: 24px; color: #979faf; font-weight: 600; }
.social { display: flex; gap: 10px; }
.soc { width: 20px; height: 20px; background: #c2c7d0; border-radius: 2px; }
.ends { margin: 24px 0 0; white-space: nowrap; }
.hours { border-bottom: 1px dotted #111; padding-bottom: 1px; }
.stat { margin: 0; }
.first-stat { margin-top: 13px; }
.val { font-weight: 400; color: #39424e; }
.blue { font-weight: 400; color: #5183f5; }
.rule { margin: 5px 0 0; border: 0; border-top: 1px solid #c2c7d0; }
.rule.lower { margin-top: 11px; }
.rate { margin-top: 8px; }
.stars { display: flex; gap: 4px; height: 22px; align-items: center; }
.more { display: block; margin-top: 0; font-size: 14px; font-weight: 400; color: #5183f5; }

.scrollbar { width: 17px; flex: none; background: #f0f0f0; display: flex; flex-direction: column; align-items: center; }
.sb-arrow { margin: 6px 0 5px; }
.sb-arrow:first-child { transform: rotate(180deg); }
.sb-thumb { width: 13px; height: 563px; background: #c2c2c2; margin-top: 29px; margin-bottom: auto; }

/* taskbar */
.taskbar { height: 40px; flex: none; display: flex; align-items: stretch; background: linear-gradient(90deg, #e8dccf 0%, #e6dbcf 30%, #d3ddd2 38%, #c4e3da 55%, #c8e2d8 62%, #e8dccf 74%, #e8dccf 84%, #d5e0d4 93%, #e8dccf 100%); }
.start { width: 48px; display: flex; align-items: center; justify-content: center; flex: none; }
.search { width: 343px; flex: none; margin-top: 1px; background: #fff; border: 1px solid #ccc; display: flex; align-items: center; gap: 13px; padding-left: 11px; font-size: 14px; color: #333; }
.tb-sys { width: 49px; display: flex; align-items: center; justify-content: center; flex: none; }
.tb-apps { display: flex; flex: none; margin-left: 2px; }
.app { width: 49px; display: flex; align-items: center; justify-content: center; position: relative; flex: none; padding-bottom: 1px; }
.app.open::after { content: ""; position: absolute; left: 5px; right: 5px; bottom: 0; height: 2px; background: #c8743a; }
.app.lit { background: #f4efe8; }
.app.lit::after { left: 0; right: 0; }
.badge { position: absolute; background: #d4d4d4; border: 1px solid #777; color: #111; font-size: 12px; text-align: center; }
.badge.wide { left: 21px; bottom: 4px; width: 29px; height: 16px; border-radius: 8px; font-size: 11px; line-height: 14px; }
.badge.round { left: 29px; bottom: 4px; width: 17px; height: 17px; border-radius: 50%; line-height: 15px; }
.on-n { font-size: 10px; font-weight: 700; fill: #fff; text-anchor: middle; }
.wa { justify-content: flex-start; }
.wa-tile { margin-left: 12px; width: 25px; height: 24px; background: #c8743a; display: flex; align-items: center; justify-content: center; }
.tray { margin-left: auto; display: flex; align-items: center; padding-right: 15px; }
.tray-i { width: 24px; display: flex; justify-content: center; }
.eng { width: 34px; text-align: center; font-size: 12px; color: #222; }
.clock { width: 74px; display: flex; flex-direction: column; align-items: center; font-size: 12px; line-height: 18px; color: #222; }
.notif { width: 36px; display: flex; justify-content: center; }

/* overlays */
.ink { position: absolute; left: 1783px; top: 315px; width: 67px; height: 475px; background: #a9a9a9; border-radius: 12px; padding: 5px; }
.ink-inner { height: 100%; background: #666; border-radius: 8px; padding-top: 2px; display: flex; flex-direction: column; }
.ink-slot { height: 51.250px; flex: none; display: flex; align-items: center; justify-content: center; }
.ink-cursor { width: 40px; height: 40px; border-radius: 50%; background: radial-gradient(circle, #b0b0b0 0%, #efefef 75%); display: flex; align-items: center; justify-content: center; }
.mini { position: absolute; left: 1890px; top: 45px; width: 30px; height: 50px; background: #ababab; border-radius: 8px 0 0 8px; padding: 8px 0 0 6px; display: flex; flex-direction: column; gap: 6px; align-items: flex-start; }
.mini svg:first-child { margin-left: 5px; }
.mini-grid { display: grid; grid-template-columns: 8px 8px; gap: 2px 3px; }
.mini-grid svg:first-child { margin-left: 0; }
```
